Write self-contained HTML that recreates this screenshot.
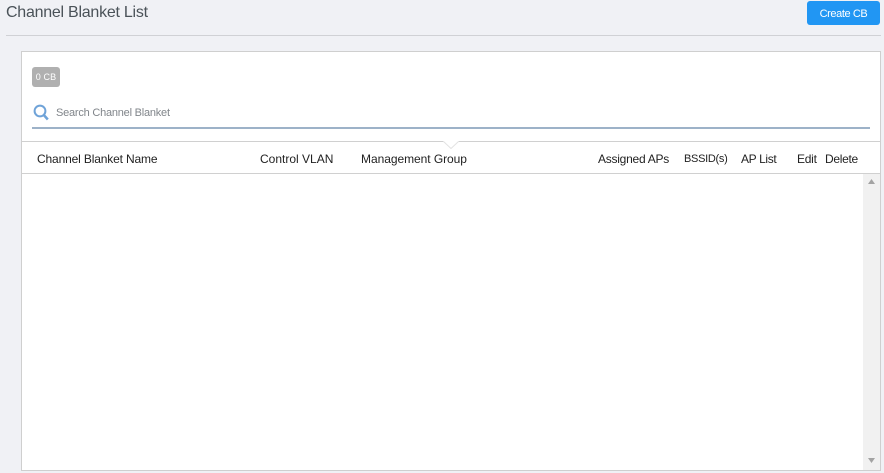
<!DOCTYPE html>
<html>
<head>
<meta charset="utf-8">
<style>
html,body{margin:0;padding:0;width:884px;height:473px;overflow:hidden;background:#f0f1f5;font-family:"Liberation Sans",sans-serif;}
div,span{position:absolute;white-space:nowrap;box-sizing:border-box;}
.h{top:151px;font-size:12px;line-height:16px;color:#222;}
</style>
</head>
<body>
<div style="left:6px;top:3px;font-size:16px;line-height:20px;color:#4a5258;letter-spacing:-.25px;">Channel Blanket List</div>
<div style="left:807px;top:1px;width:73px;height:24px;background:#2196f3;border-radius:3px;color:#fff;font-size:11px;line-height:26px;text-align:center;letter-spacing:-.4px;">Create CB</div>
<div style="left:6px;top:35px;width:875px;height:1px;background:#d0d1d5;"></div>

<div style="left:21px;top:51px;width:860px;height:420px;background:#fff;border:1px solid #cfcfcf;"></div>

<div style="left:32px;top:67px;width:28px;height:20px;background:#b0b0b0;border-radius:3px;color:#fff;font-size:9px;line-height:21px;text-align:center;letter-spacing:.1px;">0 CB</div>

<svg style="position:absolute;left:33px;top:104px;" width="16" height="17" viewBox="0 0 16 17">
<circle cx="7" cy="7" r="5.400" fill="none" stroke="#6fa3d8" stroke-width="2"/>
<path d="M10.800 11l4 4.500" stroke="#6fa3d8" stroke-width="2.500" fill="none"/>
</svg>
<div style="left:56px;top:105px;font-size:11px;line-height:16px;color:#80858a;letter-spacing:-.22px;">Search Channel Blanket</div>
<div style="left:32px;top:127px;width:838px;height:2px;background:#9db2c8;"></div>

<div style="left:22px;top:141px;width:858px;height:1px;background:#d0d0d0;"></div>
<svg style="position:absolute;left:443px;top:141px;" width="16" height="8" viewBox="0 0 16 8">
<path d="M0 0L8 7.500L16 0" fill="#fff"/>
<path d="M0.500 0.500L8 7.500L15.500 .5" fill="none" stroke="#e2e2e2" stroke-width="1"/>
</svg>

<div class="h" style="left:37px;letter-spacing:-.15px;">Channel Blanket Name</div>
<div class="h" style="left:260px;letter-spacing:0;">Control VLAN</div>
<div class="h" style="left:361px;letter-spacing:-.05px;">Management Group</div>
<div class="h" style="left:598px;letter-spacing:-.25px;">Assigned APs</div>
<div class="h" style="left:684px;font-size:11px;letter-spacing:-.3px;">BSSID(s)</div>
<div class="h" style="left:741px;letter-spacing:-.35px;">AP List</div>
<div class="h" style="left:797px;letter-spacing:-.25px;">Edit</div>
<div class="h" style="left:825px;letter-spacing:-.3px;">Delete</div>

<div style="left:22px;top:173px;width:858px;height:1px;background:#d0d0d0;"></div>

<div style="left:863px;top:174px;width:17px;height:296px;background:#f1f1f1;"></div>
<svg style="position:absolute;left:867px;top:179px;" width="9" height="6" viewBox="0 0 9 6"><path d="M4.500 0L8 5H1z" fill="#a3a3a3"/></svg>
<svg style="position:absolute;left:867px;top:458px;" width="9" height="6" viewBox="0 0 9 6"><path d="M1 0H8L4.500 5z" fill="#a3a3a3"/></svg>
</body>
</html>
